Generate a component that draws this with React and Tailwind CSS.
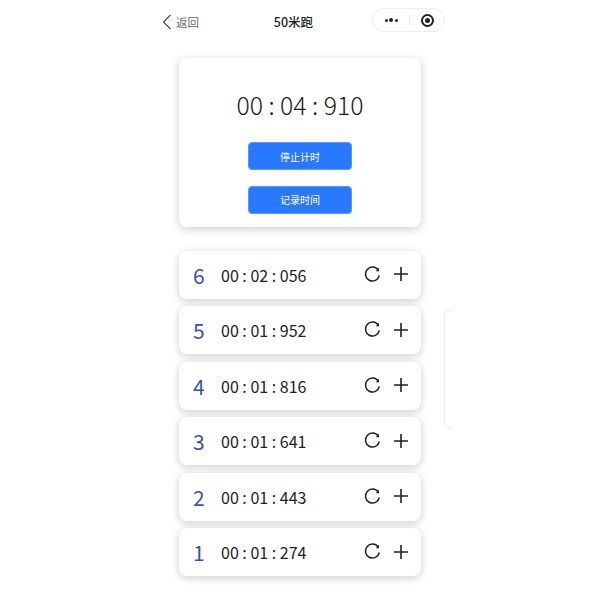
const font = { fontFamily: '"Noto Sans CJK SC", "Noto Sans", sans-serif' };

function Refresh() {
  return (
    <svg width="17" height="17" viewBox="0 0 17 17" fill="none" stroke="#222" strokeWidth="1.5">
      <path d="M14.3 4.2 A7 7 0 1 0 15.3 9.5" />
      <path d="M15 1.8 V5.2 H11.8" strokeWidth="1.2" fill="#222" stroke="none" />
    </svg>
  );
}

function Plus() {
  return (
    <svg width="16" height="16" viewBox="0 0 16 16" stroke="#222" strokeWidth="1.6">
      <path d="M8 1 V15 M1 8 H15" />
    </svg>
  );
}

const rows = [
  ["6", "00 : 02 : 056"],
  ["5", "00 : 01 : 952"],
  ["4", "00 : 01 : 816"],
  ["3", "00 : 01 : 641"],
  ["2", "00 : 01 : 443"],
  ["1", "00 : 01 : 274"],
];

export default function App() {
  return (
    <div className="relative w-[600px] h-[600px] bg-white overflow-hidden" style={font}>
      <div className="h-[44px] relative flex items-center justify-center">
        <div className="absolute left-[162px] top-[14px] flex items-center gap-[5px]">
          <svg width="10" height="16" viewBox="0 0 10 16" fill="none" stroke="#444" strokeWidth="1.2">
            <path d="M8.5 0.8 L1.5 8 L8.5 15.2" />
          </svg>
          <span className="text-[11.5px] leading-[16px] text-[#666] -ml-[1px]">返回</span>
        </div>
        <span className="text-[12.5px] font-medium text-[#222] -ml-[13px]">50米跑</span>
        <div className="absolute left-[372px] top-[8px] w-[73px] h-[24px] rounded-full border border-[#eeeeee] flex items-center">
          <div className="w-[36px] flex items-center justify-center gap-[1.5px]">
            <span className="w-[3px] h-[3px] rounded-full bg-[#222]" />
            <span className="w-[4px] h-[4px] rounded-full bg-[#222]" />
            <span className="w-[3px] h-[3px] rounded-full bg-[#222]" />
          </div>
          <div className="w-px h-[12px] bg-[#eeeeee]" />
          <div className="flex-1 flex items-center justify-center">
            <span className="w-[13px] h-[13px] rounded-full border-2 border-[#222] flex items-center justify-center">
              <span className="w-[5px] h-[5px] rounded-full bg-[#222]" />
            </span>
          </div>
        </div>
      </div>

      <div className="w-[242px] mx-auto flex flex-col">
        <div className="mt-[14px] h-[169px] rounded-[8px] bg-white shadow-[0_2px_10px_rgba(0,0,0,0.2)] flex flex-col items-center pt-[27px]">
          <div className="text-[24.8px] leading-[38px] text-[#1c1c1c] font-light">00 : 04 : 910</div>
          <button className="mt-[19px] w-[104px] h-[28px] rounded-[4px] bg-[#2979ff] border border-[#5a97ff] text-white text-[10px]">停止计时</button>
          <button className="mt-[15.5px] w-[104px] h-[28px] rounded-[4px] bg-[#2979ff] border border-[#5a97ff] text-white text-[10px]">记录时间</button>
        </div>

        <div className="mt-[23.5px] flex flex-col gap-[7.6px]">
          {rows.map(([n, t]) => (
            <div key={n} className="h-[48px] rounded-[8px] bg-white shadow-[0_2px_9px_rgba(0,0,0,0.2)] flex items-center pl-[14px] pr-[12px]">
              <span className="w-[28px] text-[21px] leading-[30px] text-[#3b52a8]">{n}</span>
              <span className="text-[16px] leading-[24px] text-[#222]">{t}</span>
              <div className="ml-auto flex items-center gap-[12px] -mt-[1px]">
                <Refresh />
                <Plus />
              </div>
            </div>
          ))}
        </div>
      </div>

      <div className="absolute left-[444px] top-[310px] w-[8px] h-[118px] rounded-l-[4px] border border-r-0 border-[#eeeeee]" />
    </div>
  );
}
